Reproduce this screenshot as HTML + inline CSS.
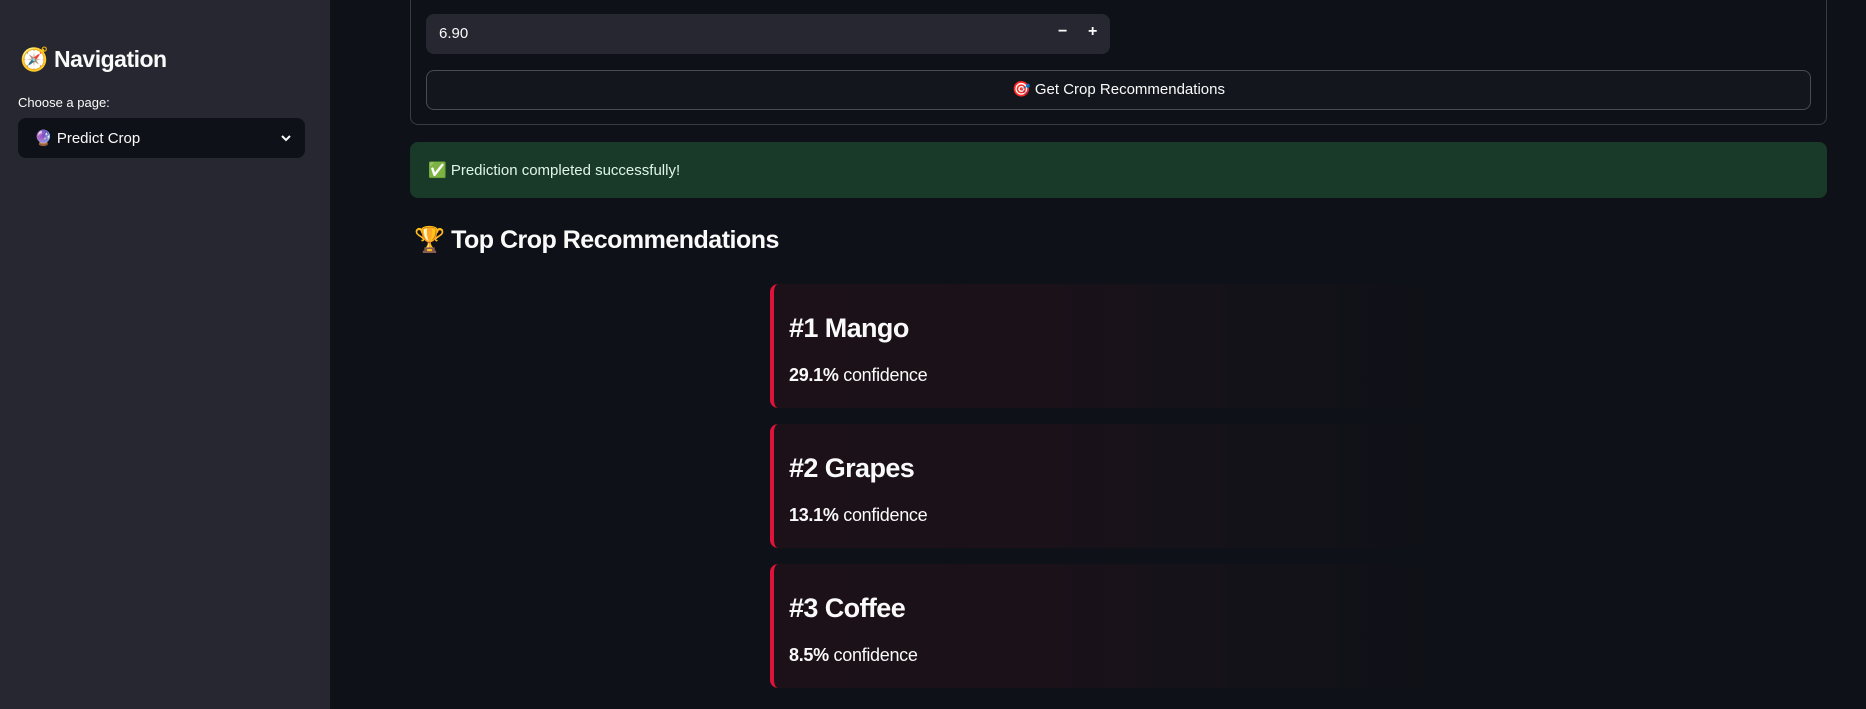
<!DOCTYPE html>
<html><head><meta charset="utf-8"><style>
*{box-sizing:border-box;margin:0;padding:0}
body{width:1866px;height:709px;background:#0e1117;font-family:"Liberation Sans",sans-serif;color:#fafafa;position:relative;overflow:hidden}
.side{position:absolute;left:0;top:0;width:330px;height:709px;background:#262730}
.abs{position:absolute}
.card{position:absolute;left:770px;width:680px;height:124px;border-left:4px solid #dc143c;border-radius:8px;background:linear-gradient(90deg,#1c1118 0%,#1a1119 40%,#141219 70%,#0e1117 100%)}
.card h3{position:absolute;left:15px;top:29px;font-size:27px;font-weight:bold;letter-spacing:-0.6px}
.card p{position:absolute;left:15px;top:81px;font-size:18px;letter-spacing:-0.3px}
</style></head><body>
<div class="side">
 <div class="abs" style="left:20px;top:46px;font-size:23px;font-weight:bold;letter-spacing:-0.5px">🧭 Navigation</div>
 <div class="abs" style="left:18px;top:95px;font-size:13px">Choose a page:</div>
 <div class="abs" style="left:18px;top:118px;width:287px;height:40px;background:#0e1117;border-radius:8px">
  <div class="abs" style="left:16px;top:11px;font-size:15px">🔮 Predict Crop</div>
  <svg class="abs" style="left:262px;top:15px" width="12" height="10"><path d="M2 3 L6 7 L10 3" stroke="#fafafa" stroke-width="2" fill="none"/></svg>
 </div>
</div>
<div class="abs" style="left:410px;top:-10px;width:1417px;height:135px;border:1px solid #3a3b45;border-radius:8px"></div>
<div class="abs" style="left:426px;top:14px;width:684px;height:40px;background:#262730;border-radius:8px">
 <div class="abs" style="left:13px;top:11px;font-size:15px">6.90</div>
 <div class="abs" style="left:632px;top:9px;font-size:16px;font-weight:bold">−</div>
 <div class="abs" style="left:662px;top:9px;font-size:16px;font-weight:bold">+</div>
</div>
<div class="abs" style="left:426px;top:70px;width:1385px;height:40px;border:1px solid #4a4b55;border-radius:8px;background:#13161d;text-align:center;line-height:38px;font-size:15px">🎯 Get Crop Recommendations</div>
<div class="abs" style="left:410px;top:142px;width:1417px;height:56px;background:#193a29;border-radius:8px">
 <div class="abs" style="left:18px;top:19px;font-size:15px;color:#dff5e6">✅ Prediction completed successfully!</div>
</div>
<div class="abs" style="left:414px;top:226px;font-size:25px;font-weight:bold;letter-spacing:-0.5px">🏆 Top Crop Recommendations</div>
<div class="card" style="top:284px"><h3>#1 Mango</h3><p><b>29.1%</b> confidence</p></div>
<div class="card" style="top:424px"><h3>#2 Grapes</h3><p><b>13.1%</b> confidence</p></div>
<div class="card" style="top:564px"><h3>#3 Coffee</h3><p><b>8.5%</b> confidence</p></div>
</body></html>
